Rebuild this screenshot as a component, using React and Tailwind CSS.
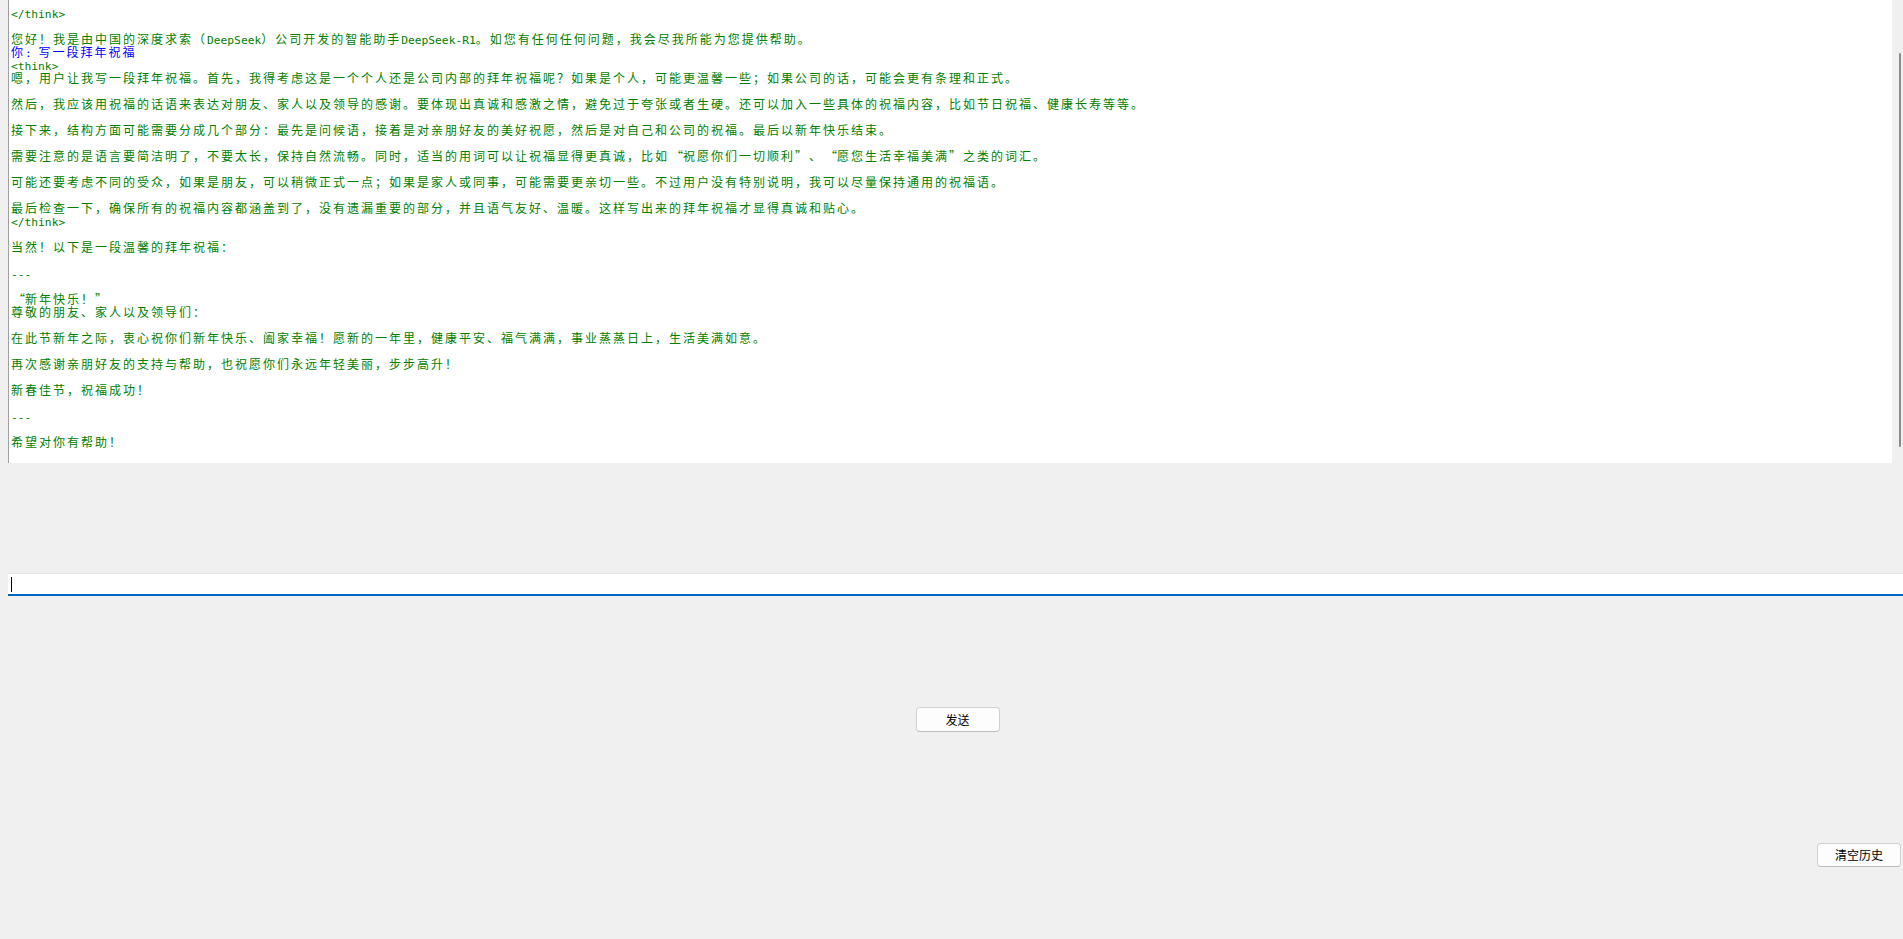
import React from "react";

const LINES = [
  { t: "</think>" },
  { t: "" },
  { t: "您好！我是由中国的深度求索（DeepSeek）公司开发的智能助手DeepSeek-R1。如您有任何任何问题，我会尽我所能为您提供帮助。" },
  { t: "你: 写一段拜年祝福", blue: true },
  { t: "<think>" },
  { t: "嗯，用户让我写一段拜年祝福。首先，我得考虑这是一个个人还是公司内部的拜年祝福呢？如果是个人，可能更温馨一些；如果公司的话，可能会更有条理和正式。" },
  { t: "" },
  { t: "然后，我应该用祝福的话语来表达对朋友、家人以及领导的感谢。要体现出真诚和感激之情，避免过于夸张或者生硬。还可以加入一些具体的祝福内容，比如节日祝福、健康长寿等等。" },
  { t: "" },
  { t: "接下来，结构方面可能需要分成几个部分：最先是问候语，接着是对亲朋好友的美好祝愿，然后是对自己和公司的祝福。最后以新年快乐结束。" },
  { t: "" },
  { t: "需要注意的是语言要简洁明了，不要太长，保持自然流畅。同时，适当的用词可以让祝福显得更真诚，比如“祝愿你们一切顺利”、“愿您生活幸福美满”之类的词汇。" },
  { t: "" },
  { t: "可能还要考虑不同的受众，如果是朋友，可以稍微正式一点；如果是家人或同事，可能需要更亲切一些。不过用户没有特别说明，我可以尽量保持通用的祝福语。" },
  { t: "" },
  { t: "最后检查一下，确保所有的祝福内容都涵盖到了，没有遗漏重要的部分，并且语气友好、温暖。这样写出来的拜年祝福才显得真诚和贴心。" },
  { t: "</think>" },
  { t: "" },
  { t: "当然！以下是一段温馨的拜年祝福：" },
  { t: "" },
  { t: "---" },
  { t: "" },
  { t: "“新年快乐！”" },
  { t: "尊敬的朋友、家人以及领导们：" },
  { t: "" },
  { t: "在此节新年之际，衷心祝你们新年快乐、阖家幸福！愿新的一年里，健康平安、福气满满，事业蒸蒸日上，生活美满如意。" },
  { t: "" },
  { t: "再次感谢亲朋好友的支持与帮助，也祝愿你们永远年轻美丽，步步高升！" },
  { t: "" },
  { t: "新春佳节，祝福成功！" },
  { t: "" },
  { t: "---" },
  { t: "" },
  { t: "希望对你有帮助！" },
];

function renderSegments(text) {
  const parts = [];
  const re = /([\x20-\x7e]+)|([“”])|([^\x20-\x7e“”]+)/g;
  let m;
  let i = 0;
  while ((m = re.exec(text)) !== null) {
    if (m[1]) {
      parts.push(
        <span
          key={i++}
          className="font-['DejaVu_Sans_Mono',monospace] text-[11.25px] tracking-normal"
        >
          {m[1]}
        </span>
      );
    } else if (m[2]) {
      parts.push(
        <span
          key={i++}
          className={
            m[2] === "“"
              ? "inline-block w-[14px] text-right tracking-normal"
              : "inline-block w-[14px] text-left tracking-normal"
          }
        >
          {m[2]}
        </span>
      );
    } else {
      parts.push(<span key={i++}>{m[3]}</span>);
    }
  }
  return parts;
}

export default function App() {
  return (
    <div className="flex h-[939px] w-full flex-col overflow-hidden bg-[#f0f0f0] font-['Noto_Sans_CJK_SC',sans-serif]">
      {/* Output text area */}
      <div className="flex h-[463px] w-full pl-[8px]">
        <div className="flex-1 overflow-hidden border-l border-[#a0a0a0] bg-white pl-[2px] pt-[6px]">
          {LINES.map((line, idx) => (
            <div
              key={idx}
              className={
                line.blue
                  ? "h-[13px] whitespace-pre text-[12px] leading-[13px] tracking-[2px] text-[#0000ff]"
                  : "h-[13px] whitespace-pre text-[12px] leading-[13px] tracking-[2px] text-[#008000]"
              }
            >
              {renderSegments(line.t)}
            </div>
          ))}
        </div>
        <div className="flex w-[11px] flex-col bg-[#f0f0f0] pl-[7px] pt-[53px]">
          <div className="h-[394px] w-[2px] rounded-full bg-[#8a8a8a]" />
        </div>
      </div>

      {/* Input entry */}
      <div className="mt-[110px] pl-[8px]">
        <div className="flex h-[23px] items-center border-t border-[#e5e5e5] border-b-2 border-b-[#0067c0] bg-white pl-[3px]">
          <div className="h-[15px] w-[1px] bg-black" />
        </div>
      </div>

      {/* Send button */}
      <div className="mt-[111px] flex justify-center pl-[12px]">
        <button className="flex h-[25px] w-[84px] items-center justify-center rounded-[4px] border border-[#d0d0d0] border-b-[#bcbcbc] bg-[#fdfdfd] text-[12px] text-black">
          发送
        </button>
      </div>

      {/* Clear history button */}
      <div className="mt-[111px] flex justify-end pr-[2px]">
        <button className="flex h-[24px] w-[84px] items-center justify-center rounded-[4px] border border-[#d0d0d0] border-b-[#bcbcbc] bg-[#fdfdfd] text-[12px] text-black">
          清空历史
        </button>
      </div>
    </div>
  );
}
